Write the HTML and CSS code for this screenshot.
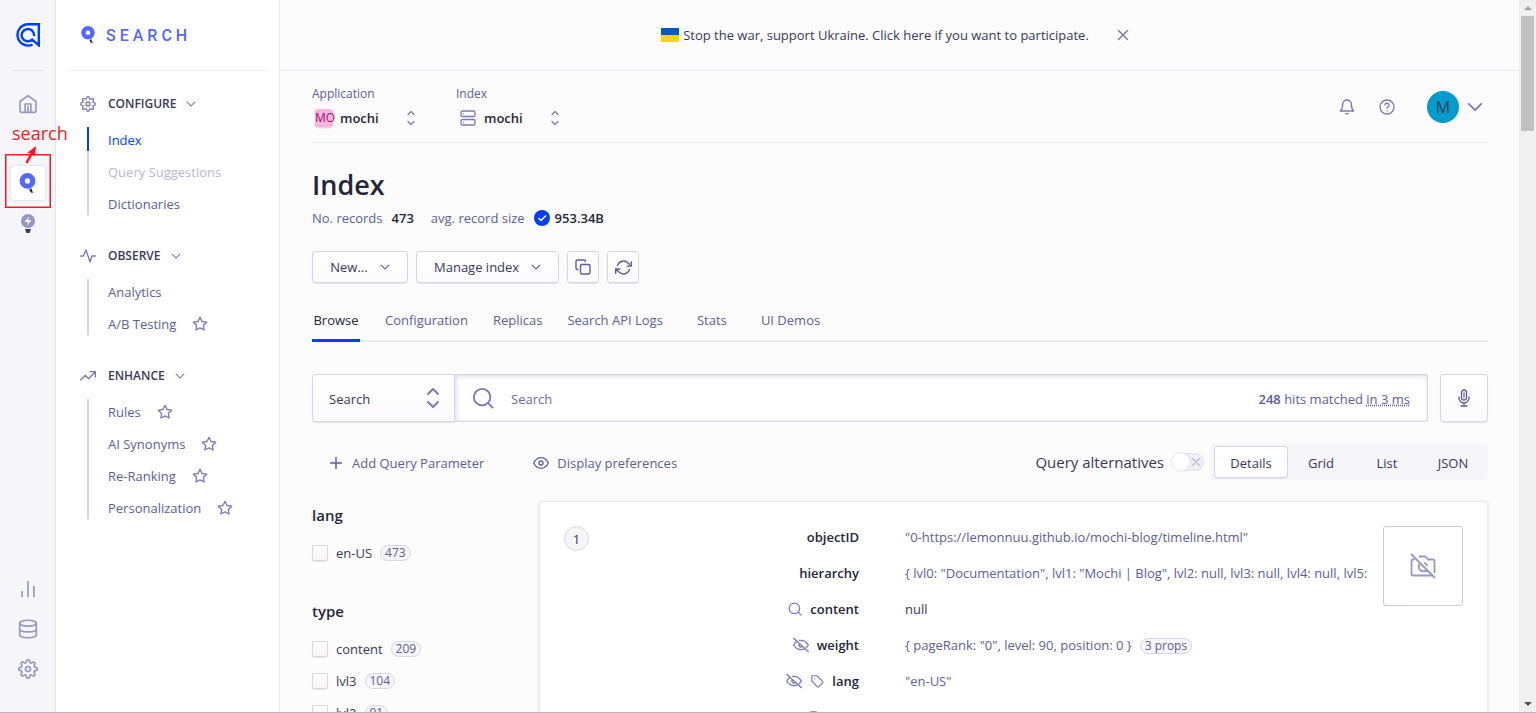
FILE: index.html
```html
<!DOCTYPE html>
<html lang="en">
<head>
<meta charset="utf-8">
<title>Index - mochi</title>
<link rel="stylesheet" href="styles.css">
</head>
<body>
<svg class="defs" aria-hidden="true">
  <symbol id="chev" viewBox="3 3 18 18"><path d="m5 8.500 7 7 7-7"/></symbol>
  <symbol id="updown" viewBox="0 0 16 24"><path d="m3 8 5-5 5 5M3 16l5 5 5-5"/></symbol>
  <symbol id="updown-small" viewBox="0 0 10 16"><path d="m2 4.500 3-3 3 3M2 11.500l3 3 3-3"/></symbol>
  <symbol id="gear" viewBox="0 0 24 24"><circle cx="12" cy="12" r="3"/><path d="M19.400 15a1.650 1.650 0 0 0 .33 1.820l.06.06a2 2 0 1 1-2.830 2.830l-.06-.06a1.650 1.650 0 0 0-2.900 1.170V21a2 2 0 0 1-4 0v-.09a1.650 1.650 0 0 0-2.900-1.260l-.06.06a2 2 0 1 1-2.830-2.830l.06-.06A1.650 1.650 0 0 0 3.100 14H3a2 2 0 0 1 0-4h.09a1.650 1.650 0 0 0 1.260-2.900l-.06-.06a2 2 0 1 1 2.830-2.830l.06.06A1.650 1.650 0 0 0 10 3.090V3a2 2 0 0 1 4 0v.09a1.650 1.650 0 0 0 2.900 1.260l.06-.06a2 2 0 1 1 2.830 2.830l-.06.06A1.650 1.650 0 0 0 20.910 10H21a2 2 0 0 1 0 4h-.09a1.650 1.650 0 0 0-1.510 1z"/></symbol>
  <symbol id="star" viewBox="0 0 24 24"><path d="m12 2 3.100 6.300 6.900 1-5 4.900 1.200 6.800-6.200-3.200L5.800 21 7 14.200 2 9.300l6.900-1z"/></symbol>
  <symbol id="eyeoff" viewBox="0 0 24 24"><path d="M9.900 5.200A10 10 0 0 1 12 5c7 0 11 7 11 7a18 18 0 0 1-3.200 3.900M6.200 6.300A18 18 0 0 0 1 12s4 7 11 7a10 10 0 0 0 5.300-1.600M9.800 9.900a3 3 0 0 0 4.300 4.200M1 2l22 20"/></symbol>
  <symbol id="tag" viewBox="0 0 24 24"><path d="M3 3h9l9.500 9.500a2 2 0 0 1 0 2.800l-6.200 6.200a2 2 0 0 1-2.800 0L3 12zM8 8h.01"/></symbol>
  <symbol id="lens" viewBox="0 0 24 24"><circle cx="11" cy="11" r="9"/><path d="m17.500 17.500 5 5"/></symbol>
  <symbol id="balloon" viewBox="0 0 16 20"><circle class="ring" cx="8" cy="7.500" r="5"/><path class="basket" d="m9.500 15.500 2.600-.8v1.600l1.300 2.600-2.300-.3z"/></symbol>
</svg>
<div class="app">
  <nav class="rail" aria-label="Products">
    <a class="logo" href="#" aria-label="Home page"><svg viewBox="0 0 24 24" width="24" height="24"><path d="M16.500 21.700A10.700 10.700 0 1 1 12 1.200h10.800v21.100l-6.600-5.700A6.200 6.200 0 1 1 18 13"/></svg></a>
    <a class="rail-item" href="#" aria-label="Overview"><svg class="i" width="20" height="20" viewBox="0 0 24 24"><path d="M2.500 9 12 2l9.500 7v11a2 2 0 0 1-2 2h-15a2 2 0 0 1-2-2zM8.500 22V12h7v10M12 15v7"/></svg></a>
    <a class="rail-item rail-current" href="#" aria-label="Search"><svg width="17" height="21"><use href="#balloon"/></svg></a>
    <a class="rail-item rail-tip" href="#" aria-label="Recommend"><svg width="16" height="20" viewBox="0 0 16 20"><circle cx="8" cy="7" r="7" fill="#9698c3"/><path d="M9 2.500 4.500 8H8l-1 3.500L11.500 6H8z" fill="#fff"/><path d="M5 15h6l-1.500 4h-3z" fill="#36395a"/></svg></a>
    <div class="rail-bottom">
      <a class="rail-item" href="#" aria-label="Usage"><svg class="i" width="20" height="20" viewBox="0 0 24 24"><path d="M5 15v6M12 3v18M19 9v12"/></svg></a>
      <a class="rail-item" href="#" aria-label="Data"><svg class="i" width="20" height="20" viewBox="0 0 24 24"><ellipse cx="12" cy="5" rx="10" ry="3.500"/><path d="M2 5v14c0 2 4 3.500 10 3.500S22 21 22 19V5M2 12c0 2 4 3.500 10 3.500s10-1.500 10-3.500"/></svg></a>
      <a class="rail-item" href="#" aria-label="Settings"><svg class="i" width="20" height="20"><use href="#gear"/></svg></a>
    </div>
    <div class="note"><span>search</span><svg width="14" height="20" viewBox="0 0 14 20"><path d="M2.500 18 9 6" stroke="#ed1c24" stroke-width="2.500"/><path d="m12 1-1 10-3.500-2.500L3 8z" fill="#ed1c24"/></svg></div>
  </nav>

  <aside class="side">
    <div class="side-title"><svg width="16" height="18"><use href="#balloon"/></svg><span>SEARCH</span></div>
    <div class="groups">
    <section>
      <button class="group-head"><svg class="i" width="16" height="16"><use href="#gear"/></svg>CONFIGURE<svg class="i" width="10" height="10"><use href="#chev"/></svg></button>
      <ul><li class="current"><a href="#">Index</a></li><li class="muted"><a href="#">Query Suggestions</a></li><li><a href="#">Dictionaries</a></li></ul>
    </section>
    <section>
      <button class="group-head"><svg class="i" width="16" height="16" viewBox="0 0 24 24"><path d="M1 12h4l4-9 6 18 3-9h5"/></svg>OBSERVE<svg class="i" width="10" height="10"><use href="#chev"/></svg></button>
      <ul><li><a href="#">Analytics</a></li><li><a href="#">A/B Testing</a><svg class="i" width="16" height="16"><use href="#star"/></svg></li></ul>
    </section>
    <section>
      <button class="group-head"><svg class="i" width="16" height="16" viewBox="0 0 24 24"><path d="m1 18 7-7 5 5L22.500 6M15 5.500h8v8"/></svg>ENHANCE<svg class="i" width="10" height="10"><use href="#chev"/></svg></button>
      <ul><li><a href="#">Rules</a><svg class="i" width="16" height="16"><use href="#star"/></svg></li><li><a href="#">AI Synonyms</a><svg class="i" width="16" height="16"><use href="#star"/></svg></li><li><a href="#">Re-Ranking</a><svg class="i" width="16" height="16"><use href="#star"/></svg></li><li><a href="#">Personalization</a><svg class="i" width="16" height="16"><use href="#star"/></svg></li></ul>
    </section>
    </div>
  </aside>

  <main class="main">
    <div class="banner"><a href="#"><span class="flag"></span>Stop the war, support Ukraine. Click here if you want to participate.</a><button aria-label="Dismiss"><svg class="i" width="12" height="12" viewBox="0 0 12 12"><path d="m1.500 1.500 9 9M10.500 1.500l-9 9"/></svg></button></div>
    <div class="content">
      <header class="top">
        <div class="picker"><label for="appsel">Application</label><div class="pick-row"><span class="mo">MO</span><select id="appsel"><option>mochi</option></select><svg class="i" width="10" height="16"><use href="#updown-small"/></svg></div></div>
        <div class="picker"><label for="idxsel">Index</label><div class="pick-row"><svg class="i server" width="16" height="16" viewBox="0 0 16 16"><rect x="1" y="1" width="14" height="5.500" rx="1.500"/><rect x="1" y="9.500" width="14" height="5.500" rx="1.500"/><path d="M3.500 3.800h.1M3.500 12.200h.1"/></svg><select id="idxsel"><option>mochi</option></select><svg class="i" width="10" height="16"><use href="#updown-small"/></svg></div></div>
        <div class="tools">
          <button aria-label="Notifications"><svg class="i" width="16" height="16" viewBox="0 0 24 24"><path d="M18.500 8a6.500 6.500 0 0 0-13 0c0 7-3.500 10-3.500 10h20s-3.500-3-3.500-10M10 22h4"/></svg></button>
          <button aria-label="Help"><svg class="i" width="16" height="16" viewBox="0 0 24 24"><circle cx="12" cy="12" r="10.500"/><path d="M9 9a3 3 0 0 1 6 .8c0 2-3 2.400-3 4M12 17.500v.1"/></svg></button>
          <button class="user" aria-label="Account"><span>M</span><svg class="i" width="16" height="16"><use href="#chev"/></svg></button>
        </div>
      </header>

      <h1>Index</h1>
      <p class="facts"><span>No. records</span><b>473</b><span class="avg">avg. record size</span><svg width="16" height="16" viewBox="0 0 16 16"><circle cx="8" cy="8" r="8" fill="#003dff"/><path d="m4.500 8 2.500 2.500 5-5" fill="none" stroke="#fff" stroke-width="1.500"/></svg><b>953.34B</b></p>

      <div class="actions">
        <button class="btn">New...<svg class="i" width="10" height="10"><use href="#chev"/></svg></button>
        <button class="btn">Manage index<svg class="i" width="10" height="10"><use href="#chev"/></svg></button>
        <button class="btn square" aria-label="Copy"><svg class="i" width="16" height="16" viewBox="0 0 16 16"><rect x="5.500" y="5.500" width="9.500" height="9.500" rx="1.500"/><path d="M3 10.500h-.5A1.500 1.500 0 0 1 1 9V2.500A1.500 1.500 0 0 1 2.500 1H9a1.500 1.500 0 0 1 1.500 1.500"/></svg></button>
        <button class="btn square" aria-label="Refresh"><svg class="i" width="17" height="17" viewBox="0 0 24 24"><path d="M23 4v6h-6M1 20v-6h6M3.500 9a9 9 0 0 1 14.900-3.400L23 10M1 14l4.600 4.400A9 9 0 0 0 20.500 15"/></svg></button>
      </div>

      <nav class="tabs" aria-label="Index sections"><a class="on" href="#">Browse</a><a href="#">Configuration</a><a href="#">Replicas</a><a href="#">Search API Logs</a><a href="#">Stats</a><a href="#">UI Demos</a></nav>

      <div class="query">
        <div class="mode"><select aria-label="Mode"><option>Search</option></select><svg class="i" width="16" height="24"><use href="#updown"/></svg></div>
        <div class="field"><svg class="i" width="22" height="22"><use href="#lens"/></svg><input type="text" placeholder="Search" aria-label="Search records"><span><b>248</b> hits matched <u>in 3 ms</u></span></div>
        <button class="btn mic" aria-label="Voice search"><svg class="i" width="16" height="18" viewBox="0 0 16 18"><rect x="5.500" y="1" width="5" height="10" rx="2.500"/><path d="M3 8v1a5 5 0 0 0 10 0V8M8 14v3M5 17h6M8 4v4"/></svg></button>
      </div>

      <div class="toolbar">
        <button class="link"><svg class="i" width="12" height="12" viewBox="0 0 12 12"><path d="M6 .5v11M.5 6h11"/></svg>Add Query Parameter</button>
        <button class="link prefs"><svg class="i" width="16" height="16" viewBox="0 0 24 24"><path d="M1 12s4-8 11-8 11 8 11 8-4 8-11 8S1 12 1 12z"/><circle cx="12" cy="12" r="3"/></svg>Display preferences</button>
        <label class="switch">Query alternatives<span class="track"><input type="checkbox"><svg class="i" width="8" height="8" viewBox="0 0 8 8"><path d="m.5.5 7 7M7.500.5l-7 7"/></svg></span></label>
        <div class="views"><button class="on">Details</button><button>Grid</button><button>List</button><button>JSON</button></div>
      </div>

      <div class="results">
        <div class="facets">
          <h2>lang</h2>
          <label><input type="checkbox">en-US<span class="pill">473</span></label>
          <h2 class="next">type</h2>
          <label><input type="checkbox">content<span class="pill">209</span></label>
          <label><input type="checkbox">lvl3<span class="pill">104</span></label>
          <label><input type="checkbox">lvl2<span class="pill">91</span></label>
        </div>
        <article class="card">
          <span class="rank">1</span>
          <dl>
            <dt>objectID</dt><dd>"0-https://lemonnuu.github.io/mochi-blog/timeline.html"</dd>
            <dt>hierarchy</dt><dd>{ lvl0: "Documentation", lvl1: "Mochi | Blog", lvl2: null, lvl3: null, lvl4: null, lvl5:</dd>
            <dt><svg class="i" width="14" height="14"><use href="#lens"/></svg>content</dt><dd class="null">null</dd>
            <dt><svg class="i" width="16" height="16"><use href="#eyeoff"/></svg>weight</dt><dd>{ pageRank: "0", level: 90, position: 0 }<span class="pill">3 props</span></dd>
            <dt><svg class="i" width="16" height="16"><use href="#eyeoff"/></svg><svg class="i" width="14" height="14"><use href="#tag"/></svg>lang</dt><dd>"en-US"</dd>
            <dt><svg class="i" width="14" height="14"><use href="#tag"/></svg>type</dt><dd>"lvl1"</dd>
          </dl>
          <div class="thumb"><svg class="i" width="26" height="26" viewBox="0 0 26 26"><path d="m1 1 24 24M4.500 6.500H3A1.500 1.500 0 0 0 1.500 8v13A1.500 1.500 0 0 0 3 22.500h18.500M9 3.500h6.500l2.500 3h5A1.500 1.500 0 0 1 24.500 8v12M10 10.500a4.500 4.500 0 1 0 6.500 6.500M14 9.800a4.500 4.500 0 0 1 3.200 3.200"/></svg></div>
        </article>
      </div>
    </div>
  </main>
  <div class="scroll" aria-hidden="true"><i class="up"></i><i class="thumb-bar"></i><i class="down"></i></div>
</div>
</body>
</html>
```
FILE: styles.css
```css
* { box-sizing: border-box; }
body { margin: 0; font-family: "Open Sans", "Noto Sans", sans-serif; font-size: 13px; line-height: 20px; color: #36395a; background: #fcfcfd; }
button, input, select { font: inherit; color: inherit; background: none; border: 0; margin: 0; padding: 0; }
select { appearance: none; }
a { color: inherit; text-decoration: none; }
b { font-weight: 600; }
svg { flex: none; display: block; }
.defs { position: absolute; width: 0; height: 0; }
.i { fill: none; stroke: #7879b8; stroke-width: 2; stroke-linecap: round; stroke-linejoin: round; }
.ring { fill: #fff; stroke: #5468ff; stroke-width: 5; }
.basket { fill: #23263b; }

.app { display: flex; height: 100vh; overflow: hidden; border-bottom: 1px solid #b8b8ba; }

/* product rail */
.rail { position: relative; flex: none; width: 56px; background: #f5f5fa; border-right: 1px solid #e4e4ee; display: flex; flex-direction: column; align-items: center; }
.logo { width: 32px; height: 71px; border-bottom: 1px solid #e4e4ee; display: grid; place-items: center; margin-bottom: 16px; }
.logo path { fill: none; stroke: #003dff; stroke-width: 2.4; }
.rail-item { width: 34px; height: 34px; display: grid; place-items: center; }
.rail-item .i { stroke: #9698c3; }
.rail-current { margin-top: 45px; background: #fff; border-radius: 3px; box-shadow: 0 0 3px #cfcfe0; }
.rail-tip { margin-top: 7px; }
.rail-bottom { margin-top: auto; padding-bottom: 26px; display: grid; gap: 6px; }
.note { position: absolute; left: 5px; top: 154px; width: 46px; height: 54px; border: 1px solid #ed1c24; outline: 1px solid #f0868b; outline-offset: -2px; }
.note span { position: absolute; left: 6px; top: -34px; font-size: 18px; line-height: 24px; color: #ed1c24; z-index: 2; }
.note svg { position: absolute; left: 18px; top: -10px; }

/* section menu */
.side { flex: none; width: 224px; background: #fff; border-right: 1px solid #e9e9f2; }
.side-title { display: flex; align-items: center; gap: 10px; height: 71px; margin: 0 10px 0 12px; padding-left: 12px; border-bottom: 1px solid #f0f0f6; color: #5468ff; font: 500 16px Roboto, sans-serif; letter-spacing: 4px; }
.groups { display: grid; gap: 28px; padding: 20px 0 0 24px; }
.group-head { display: flex; align-items: center; gap: 12px; height: 24px; padding-top: 1px; font-size: 12px; font-weight: 600; }
.group-head .i:last-child { margin-left: -2px; }
.groups ul { list-style: none; display: grid; gap: 8px; margin: 12px 0 0 7px; padding: 0; border-left: 2px solid #d6d6e7; }
.groups li { position: relative; display: flex; align-items: center; gap: 16px; height: 24px; padding: 1px 0 0 19px; color: #5a5e9a; }
.groups .current { color: #003dff; }
.groups .current::before { content: ""; position: absolute; left: -2px; top: 0; bottom: 0; width: 2px; background: #003dff; }
.groups .muted { color: #b6b7d5; }

/* page */
.main { flex: 1; min-width: 0; }
.banner { display: flex; justify-content: center; align-items: center; gap: 28px; height: 71px; padding-right: 9px; border-bottom: 1px solid #ebebf3; }
.banner a { display: flex; align-items: center; gap: 4px; }
.flag { width: 18px; height: 14px; background: linear-gradient(#005bbb 50%, #ffd500 50%); }
.banner .i { stroke-width: 1.5; }
.content { padding: 0 31px 0 32px; }
.top { display: flex; height: 72px; border-bottom: 1px solid #ececf3; padding-top: 14px; }
.picker { width: 144px; color: #5a5e9a; font-size: 12px; line-height: 18px; }
.picker label { display: block; }
.pick-row { display: flex; align-items: center; height: 30px; width: 104px; }
.pick-row select { flex: 1; min-width: 0; font-size: 13px; font-weight: 600; color: #23263b; }
.pick-row .i { stroke-width: 1.3; }
.server { margin: 0 8px 0 4px; }
.mo { width: 18px; height: 18px; margin: 0 7px 0 3px; background: #ffb3e0; border-radius: 3px; box-shadow: 0 1px 2px #d0d0dd; color: #8b1e68; text-align: center; }
.tools { margin-left: auto; display: flex; align-items: center; height: 44px; gap: 24px; }
.user { display: flex; align-items: center; gap: 8px; margin-left: 8px; padding-right: 5px; }
.user span { width: 32px; height: 32px; line-height: 32px; border-radius: 50%; background: #009ccc; text-align: center; font-size: 16px; }
h1 { margin: 24px 0 0; font-size: 27px; line-height: 36px; font-weight: 600; color: #23263b; }
.facts { display: flex; align-items: center; gap: 9px; margin: 5px 0 23px; color: #5a5e9a; }
.facts b { color: #23263b; }
.facts b:last-child { margin-left: -4px; }
.avg { margin-left: 8px; }
.actions { display: flex; gap: 8px; }
.btn { display: flex; align-items: center; justify-content: center; gap: 12px; height: 32px; padding: 0 17px; background: linear-gradient(#fff, #fbfbfd); border: 1px solid #d6d6e7; border-radius: 3px; box-shadow: 0 1px 1px #e4e4ee; }
.btn:first-child { min-width: 96px; }
.btn .i { stroke: #5a5e9a; }
.btn.square { width: 32px; padding: 0; }
.square .i { stroke-width: 1.4; }
.square:last-child .i { stroke-width: 2; }
.tabs { display: flex; gap: 25px; height: 59px; padding-top: 16px; border-bottom: 2px solid #ebebf3; color: #5a5e9a; }
.tabs a { min-width: 48px; height: 43px; line-height: 42px; text-align: center; }
.tabs .on { color: #23263b; border-bottom: 3px solid #003dff; }

.query { display: flex; height: 48px; margin-top: 32px; }
.mode { position: relative; width: 143px; background: linear-gradient(#fff, #fafafc); border: 1px solid #d6d6e7; border-radius: 3px 0 0 3px; box-shadow: 0 1px 1px #e4e4ee; }
.mode select { width: 100%; height: 100%; padding: 2px 16px 0; }
.mode svg { position: absolute; right: 13px; top: 11px; pointer-events: none; }
.field { flex: 1; display: flex; align-items: center; gap: 17px; padding: 0 17px; background: #fff; border: 1px solid #d6d6e7; border-left: 0; box-shadow: inset 1px 1px 4px #d6d6e7; border-radius: 0 3px 3px 0; color: #5a5e9a; }
.field input { flex: 1; height: 44px; min-width: 0; padding-top: 2px; }
.field input::placeholder { color: #6a6ca5; opacity: 1; }
.field span { padding-top: 2px; }
.field u { text-decoration-style: dotted; }
.query .mic { width: 48px; height: 48px; padding: 0; margin-left: 12px; }
.mic .i { stroke-width: 1.3; }
.toolbar { display: flex; align-items: center; height: 36px; margin-top: 22px; color: #5a5e9a; }
.link { display: flex; align-items: center; gap: 10px; padding: 2px 0 0 18px; }
.link.prefs { gap: 8px; margin-left: 31px; }
.link .i { stroke-width: 1.5; stroke: #5a5e9a; }
.link.prefs .i { stroke-width: 2; }
.switch { margin-left: auto; display: flex; align-items: center; gap: 8px; color: #36395a; font-size: 15px; }
.track { position: relative; display: block; width: 32px; height: 18px; border-radius: 9px; background: #efeff6; box-shadow: inset 0 0 2px #c8c8dc; }
.track input { appearance: none; position: absolute; left: 0; top: 0; width: 18px; height: 18px; border-radius: 50%; background: #fff; box-shadow: 0 0 2px #c8c8dc; }
.track svg { position: absolute; right: 4px; top: 5px; stroke: #b6b7d5; stroke-width: 1.2; }
.views { display: flex; margin-left: 6px; padding: 2px 2px 2px 4px; border-radius: 4px; background: #f5f5fa; color: #36395a; }
.views button { height: 32px; min-width: 66px; padding-top: 2px; }
.views .on { min-width: 74px; background: #fff; border: 1px solid #d6d6e7; border-radius: 3px; box-shadow: 0 1px 1px #e4e4ee; }

.results { display: flex; margin-top: 21px; height: 260px; }
.facets { flex: none; width: 227px; }
.facets h2 { margin: 4px 0 12px; font-size: 15px; line-height: 20px; font-weight: 600; color: #23263b; }
.facets h2.next { margin-top: 32px; }
.facets label { display: flex; align-items: center; height: 32px; }
.facets input { appearance: none; width: 16px; height: 16px; margin-right: 8px; border: 1px solid #d6d6e7; border-radius: 2px; background: linear-gradient(#fff, #f5f5fa); box-shadow: 0 1px 1px #e4e4ee; }
.pill { margin-left: 8px; padding: 0 4px; border: 1px solid #d6d6e7; border-radius: 8px; background: #f5f5fa; color: #5a5e9a; font-size: 12px; line-height: 14px; display: inline-block; }
.card { flex: 1; min-width: 0; display: flex; align-items: flex-start; background: #fff; border: 1px solid #ebebf3; border-radius: 4px; padding: 24px 24px 0; box-shadow: 0 0 3px #e0e0ea; }
.rank { flex: none; width: 25px; height: 25px; line-height: 24px; border: 1px solid #d6d6e7; border-radius: 50%; background: #f5f5fa; text-align: center; }
dl { flex: 1; min-width: 0; margin: -7px 8px 0 0; display: grid; grid-template-columns: 270px 1fr; column-gap: 46px; grid-auto-rows: 36px; align-items: center; }
dt { display: flex; align-items: center; justify-content: flex-end; gap: 8px; font-weight: 600; color: #23263b; }
dd { margin: 0; min-width: 0; overflow: hidden; white-space: nowrap; color: #5a5e9a; }
dd.null { color: #36395a; }
.thumb { flex: none; width: 80px; height: 80px; border: 1px solid #c8c8e0; border-radius: 3px; display: grid; place-items: center; }
.thumb .i { stroke: #9698c3; stroke-width: 1.8; stroke-linecap: butt; }

.scroll { flex: none; width: 17px; background: #f0f0f0; display: flex; flex-direction: column; align-items: center; }
.up, .down { border: 4px solid transparent; border-top: 0; border-bottom: 4px solid #a0a0a0; margin: 6px 0; }
.thumb-bar { width: 13px; height: 115px; background: #c1c1c1; }
.down { margin: auto 0 6px; border-bottom: 0; border-top: 4px solid #505050; }
```
